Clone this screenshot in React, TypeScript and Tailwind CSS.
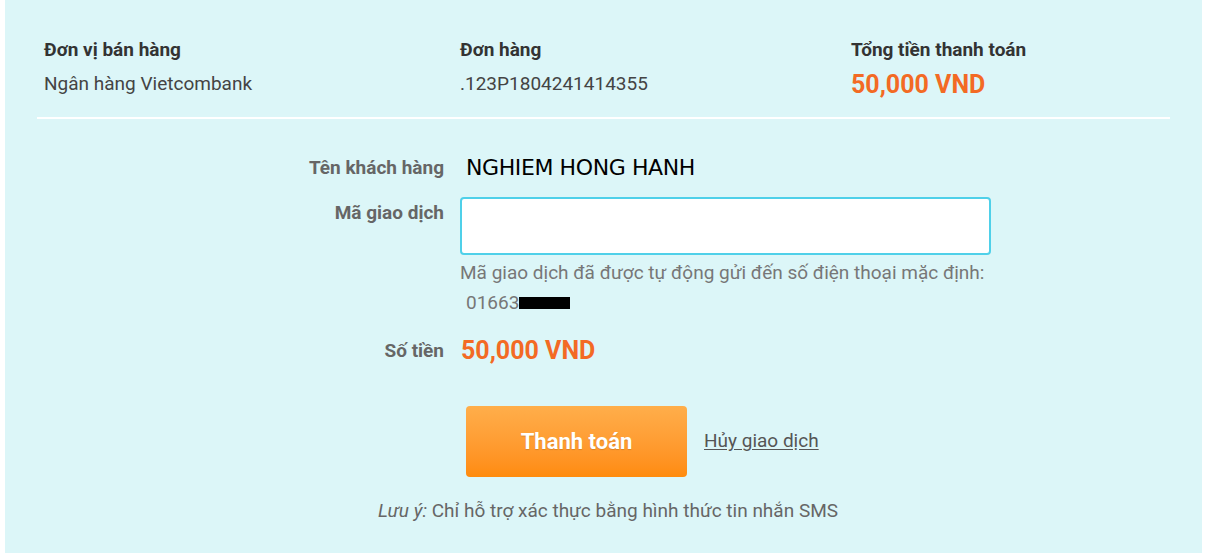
export default function App() {
  return (
    <div className="min-h-screen bg-white pl-[5px] pr-[3px] font-['Roboto',sans-serif]">
      <div className="h-[553px] bg-[#dcf6f8] px-[32px]">
        {/* order summary */}
        <div className="grid grid-cols-[416px_391px_1fr] pt-[39px] pb-[21px] pl-[7px] border-b-2 border-white">
          <div>
            <div className="text-[19px] leading-[22px] font-bold text-[#333]">Đơn vị bán hàng</div>
            <div className="mt-[12px] text-[19px] leading-[22px] text-[#444]">Ngân hàng Vietcombank</div>
          </div>
          <div>
            <div className="text-[19px] leading-[22px] font-bold text-[#333]">Đơn hàng</div>
            <div className="mt-[12px] text-[19px] leading-[22px] text-[#444]">.123P1804241414355</div>
          </div>
          <div>
            <div className="text-[19px] leading-[22px] font-bold text-[#333]">Tổng tiền thanh toán</div>
            <div className="mt-[13px] text-[25px] leading-[22px] font-bold text-[#f36a24]">50,000 VND</div>
          </div>
        </div>

        {/* form */}
        <div className="pt-[36px]">
          <div className="flex items-center h-[26px]">
            <div className="w-[407px] text-right text-[19px] leading-[26px] font-bold text-[#666]">Tên khách hàng</div>
            <div className="ml-[22px] text-[22px] leading-[26px] text-black font-['DejaVu_Sans',sans-serif] tracking-[-0.4px]">NGHIEM HONG HANH</div>
          </div>

          <div className="flex mt-[16px]">
            <div className="w-[407px] pt-[6px] text-right text-[19px] leading-[20px] font-bold text-[#666]">Mã giao dịch</div>
            <div className="ml-[16px]">
              <input
                type="text"
                className="block w-[531px] h-[58px] bg-white border-2 border-[#4fd0e9] rounded-[4px] outline-none"
              />
              <div className="mt-[3px] text-[19px] leading-[30px] text-[#777]">
                Mã giao dịch đã được tự động gửi đến số điện thoại mặc định:
              </div>
              <div className="flex items-center pl-[6px] text-[19px] leading-[30px] text-[#777]">
                01663
                <span className="inline-block w-[51px] h-[12px] bg-black" />
              </div>
            </div>
          </div>

          <div className="flex items-center h-[28px] mt-[19px]">
            <div className="w-[407px] text-right text-[19px] leading-[26px] font-bold text-[#666]">Số tiền</div>
            <div className="ml-[17px] text-[25px] leading-[28px] font-bold text-[#f36a24]">50,000 VND</div>
          </div>

          <div className="flex items-center mt-[41px] ml-[429px]">
            <button className="w-[221px] h-[71px] rounded-[4px] bg-gradient-to-b from-[#ffae4a] to-[#ff8b0c] text-white text-[22px] font-bold [text-shadow:0_1px_1px_rgba(0,0,0,0.15)]">
              Thanh toán
            </button>
            <a className="ml-[17px] text-[19px] text-[#555] underline underline-offset-2">Hủy giao dịch</a>
          </div>

          <div className="mt-[22px] text-center text-[19px] leading-[24px] text-[#666] pl-[9px]">
            <span className="italic">Lưu ý:</span> Chỉ hỗ trợ xác thực bằng hình thức tin nhắn SMS
          </div>
        </div>
      </div>
    </div>
  );
}
